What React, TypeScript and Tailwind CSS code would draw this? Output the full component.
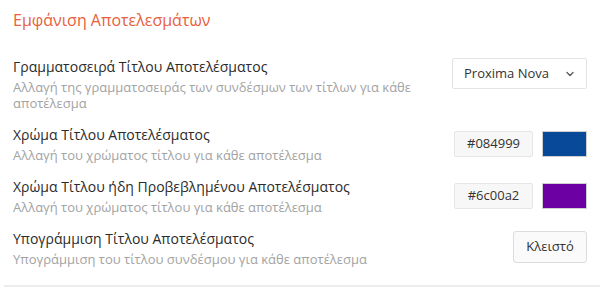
import { ChevronDown } from 'lucide-react'

const font = { fontFamily: '"Open Sans", "DejaVu Sans", sans-serif' }

interface RowProps {
  title: string
  desc: string
  children: React.ReactNode
}

const Row = ({ title, desc, children }: RowProps) => (
  <div className="flex items-start justify-between">
    <div className="w-[420px]">
      <div className="text-[14px] leading-[20px] text-[#2b2b2b]">{title}</div>
      <div className="mt-[2px] text-[13px] leading-[16px] text-[#a3a3a3]">{desc}</div>
    </div>
    {children}
  </div>
)

const ColorField = ({ hex }: { hex: string }) => (
  <div className="mt-[6px] flex items-center gap-[9px]">
    <div className="flex h-[26px] w-[79px] items-center justify-center rounded-[2px] border border-[#e6e6e6] bg-[#f7f7f7] text-[13px] text-[#333]">
      {hex}
    </div>
    <div
      className="h-[26px] w-[45px] border border-[#cfcfcf]"
      style={{ backgroundColor: hex }}
    />
  </div>
)

export default function App() {
  return (
    <div className="h-[294px] w-[600px] bg-white" style={font}>
      <div className="px-[13px] pt-[8px]">
        <h2 className="text-[16px] leading-[24px] text-[#e8603c]">
          Εμφάνιση Αποτελεσμάτων
        </h2>
        <div className="mt-[25px] flex flex-col gap-[14px]">
          <Row
            title="Γραμματοσειρά Τίτλου Αποτελέσματος"
            desc="Αλλαγή της γραμματοσειράς των συνδέσμων των τίτλων για κάθε αποτέλεσμα"
          >
            <div className="mt-[1px] flex h-[31px] w-[135px] items-center justify-between rounded-[2px] border border-[#e3e3e3] bg-white pl-[11px] pr-[10px] text-[13px] text-[#333]">
              <span>Proxima Nova</span>
              <ChevronDown size={12} strokeWidth={2.5} className="text-[#555]" />
            </div>
          </Row>
          <Row
            title="Χρώμα Τίτλου Αποτελέσματος"
            desc="Αλλαγή του χρώματος τίτλου για κάθε αποτέλεσμα"
          >
            <ColorField hex="#084999" />
          </Row>
          <Row
            title="Χρώμα Τίτλου ήδη Προβεβλημένου Αποτελέσματος"
            desc="Αλλαγή του χρώματος τίτλου για κάθε αποτέλεσμα"
          >
            <ColorField hex="#6c00a2" />
          </Row>
          <Row
            title="Υπογράμμιση Τίτλου Αποτελέσματος"
            desc="Υπογράμμιση του τίτλου συνδέσμου για κάθε αποτέλεσμα"
          >
            <div className="mt-[2px] flex h-[32px] w-[74px] items-center justify-center rounded-[3px] border border-[#dcdcdc] bg-[#fafafa] text-[13px] text-[#333]">
              Κλειστό
            </div>
          </Row>
        </div>
      </div>
      <div className="mt-[18px] ml-[4px] h-[2px] bg-[#ededed]" />
    </div>
  )
}
